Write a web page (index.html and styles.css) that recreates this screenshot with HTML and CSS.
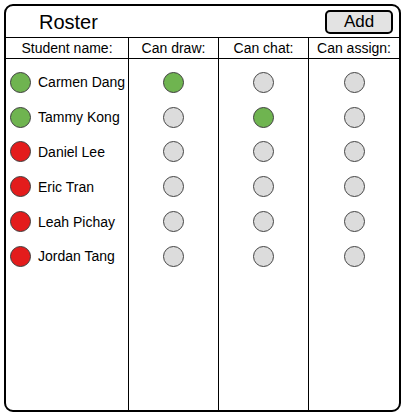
FILE: index.html
```html
<!DOCTYPE html>
<html>
<head>
<meta charset="utf-8">
<link rel="stylesheet" href="styles.css">
</head>
<body>
<div class="frame">
  <div class="titlebar">
    <span class="title">Roster</span>
    <button class="add">Add</button>
  </div>
  <div class="table">
    <div class="col col-name">
      <div class="head">Student name:</div>
      <div class="cells">
        <div class="cell name"><span class="dot green"></span>Carmen Dang</div>
        <div class="cell name"><span class="dot green"></span>Tammy Kong</div>
        <div class="cell name"><span class="dot red"></span>Daniel Lee</div>
        <div class="cell name"><span class="dot red"></span>Eric Tran</div>
        <div class="cell name"><span class="dot red"></span>Leah Pichay</div>
        <div class="cell name"><span class="dot red"></span>Jordan Tang</div>
      </div>
    </div>
    <div class="col">
      <div class="head">Can draw:</div>
      <div class="cells">
        <div class="cell"><span class="dot green"></span></div>
        <div class="cell"><span class="dot"></span></div>
        <div class="cell"><span class="dot"></span></div>
        <div class="cell"><span class="dot"></span></div>
        <div class="cell"><span class="dot"></span></div>
        <div class="cell"><span class="dot"></span></div>
      </div>
    </div>
    <div class="col">
      <div class="head">Can chat:</div>
      <div class="cells">
        <div class="cell"><span class="dot"></span></div>
        <div class="cell"><span class="dot green"></span></div>
        <div class="cell"><span class="dot"></span></div>
        <div class="cell"><span class="dot"></span></div>
        <div class="cell"><span class="dot"></span></div>
        <div class="cell"><span class="dot"></span></div>
      </div>
    </div>
    <div class="col">
      <div class="head">Can assign:</div>
      <div class="cells">
        <div class="cell"><span class="dot"></span></div>
        <div class="cell"><span class="dot"></span></div>
        <div class="cell"><span class="dot"></span></div>
        <div class="cell"><span class="dot"></span></div>
        <div class="cell"><span class="dot"></span></div>
        <div class="cell"><span class="dot"></span></div>
      </div>
    </div>
  </div>
</div>
</body>
</html>
```

FILE: styles.css
```css
* { box-sizing: border-box; }
html, body { margin: 0; padding: 0; background: #fff; }
body {
  font-family: "Liberation Sans", Arial, sans-serif;
  color: #000;
}
.frame {
  margin: 4px 0 0 4px;
  width: 397px;
  height: 408px;
  border: 2px solid #000;
  border-radius: 9px;
  display: flex;
  flex-direction: column;
  overflow: hidden;
}
.titlebar {
  height: 32px;
  border-bottom: 1px solid #000;
  display: flex;
  align-items: flex-start;
  justify-content: space-between;
  padding: 0 6px 0 33px;
}
.title {
  font-size: 20px;
  line-height: 20px;
  margin-top: 6px;
}
.add {
  margin-top: 4px;
  width: 68px;
  height: 24px;
  border: 2px solid #000;
  border-radius: 5px;
  background: #e3e3e3;
  font-family: "Liberation Sans", Arial, sans-serif;
  font-size: 17px;
  line-height: 18px;
  padding: 0;
  color: #000;
}
.table {
  flex: 1;
  display: grid;
  grid-template-columns: 122px 90px 90px 1fr;
}
.col {
  display: flex;
  flex-direction: column;
  border-left: 1px solid #000;
}
.col-name { border-left: none; }
.head {
  height: 21px;
  border-bottom: 1px solid #000;
  font-size: 14px;
  line-height: 20px;
  text-align: center;
}
.cells {
  padding-top: 6px;
  display: flex;
  flex-direction: column;
}
.cell {
  height: 34.8px;
  display: flex;
  align-items: center;
  justify-content: center;
}
.cell.name {
  justify-content: flex-start;
  padding-left: 4px;
  font-size: 14px;
  gap: 7px;
}
.dot {
  width: 21px;
  height: 21px;
  border-radius: 50%;
  border: 1px solid #444;
  background: #dcdcdc;
  flex: none;
}
.dot.green { background: #6fb450; border-color: #3f3f3f; }
.dot.red { background: #e31c1c; border-color: #3f3f3f; }
```
